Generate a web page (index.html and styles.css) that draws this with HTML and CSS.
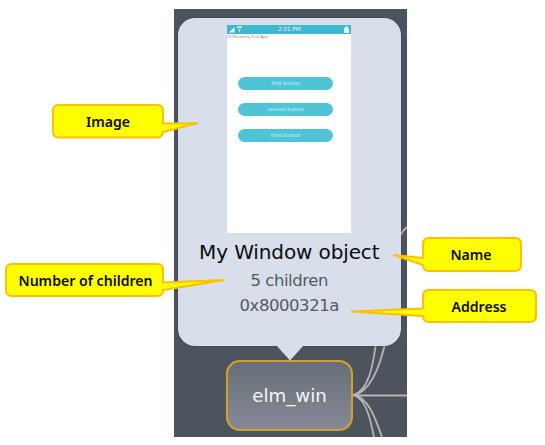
FILE: index.html
```html
<!DOCTYPE html>
<html lang="en">
<head>
<meta charset="utf-8">
<title>Object tooltip</title>
<link rel="stylesheet" href="styles.css">
</head>
<body>
<main class="figure">
  <section class="panel">
    <svg class="links" width="233" height="428" viewBox="0 0 233 428">
      <path d="M179 386C194 382 199 360 203 326M179 386C196 384 206 360 213 326M226 227Q229 221 233 218M179 386C192 390 196 408 200 428M179 386C194 388 201 408 208 428M179 386.500H233"/>
    </svg>
    <div class="card">
      <div class="phone">
        <div class="status">
          <svg width="18" height="9" viewBox="0 0 18 9"><path d="M2 7.500L7.500 2v5.500z"/><path d="M10 1h5v2h-5zM11 4h3v1h-3zM12 5h1v2h-1z" opacity=".7"/></svg>
          <span class="time">2:31 PM</span>
          <svg width="9" height="9" viewBox="0 0 9 9"><path d="M2 3h5v5H2zM3 1.500h3V3H3z"/></svg>
        </div>
        <p class="title">UI Hierarchy Test App</p>
        <div class="buttons">
          <span class="button">first button</span>
          <span class="button">second button</span>
          <span class="button">third button</span>
        </div>
      </div>
      <h1 class="name">My Window object</h1>
      <p class="detail children">5 children</p>
      <p class="detail address">0x8000321a</p>
    </div>
    <svg class="pointer" width="28" height="16" viewBox="0 0 28 16"><path d="M0 0H28L14 15.500Z"/></svg>
    <div class="node"><span>elm_win</span></div>
  </section>

  <div class="callout image">
    <svg width="150" height="40" viewBox="0 0 150 40"><path d="M7 2H105Q111 2 111 8V20.500L145 20.300L111 29V29Q110 34.500 105 34.500H7Q1 34.500 1 28.500V8Q1 2 7 2Z"/></svg>
    <span>Image</span>
  </div>
  <div class="callout count">
    <svg width="225" height="40" viewBox="0 0 225 40"><path d="M7 2H152Q158 2 158 8V20.500L219 18L158 28V28Q158 34 152 34H7Q1 34 1 28V8Q1 2 7 2Z"/></svg>
    <span>Number of children</span>
  </div>
  <div class="callout object-name">
    <svg width="135" height="40" viewBox="0 0 135 40"><path d="M38 2H124Q130 2 130 8V29Q130 35 124 35H38Q32 35 32 29V29L3 19L32 22V8Q32 2 38 2Z"/></svg>
    <span>Name</span>
  </div>
  <div class="callout object-address">
    <svg width="190" height="40" viewBox="0 0 190 40"><path d="M78 2H179Q185 2 185 8V28Q185 34 179 34H78Q72 34 72 28V28L0 23.500L72 20.500V8Q72 2 78 2Z"/></svg>
    <span>Address</span>
  </div>
</main>
</body>
</html>
```
FILE: styles.css
```css
* { box-sizing: border-box; }
body { margin: 0; background: #fff; font-family: "DejaVu Sans", sans-serif; }
p, h1 { margin: 0; font-weight: 400; }
.figure { position: relative; width: 545px; height: 445px; padding: 9px 0 0 174px; overflow: hidden; }
.panel {
  position: relative;
  display: flex; flex-direction: column;
  width: 233px; height: 428px; padding: 8.5px 0 0 3.5px;
  background: #4e545e; overflow: hidden;
}
.links { position: absolute; left: 0; top: 0; fill: none; stroke: #b4b5b6; stroke-width: 1.8; }
.card {
  position: relative;
  display: flex; flex-direction: column; align-items: center;
  width: 223.5px; height: 328px; padding-top: 7.500px;
  border-radius: 17px; background: #d8deea;
  box-shadow: 0 0 2px #343a43;
}
.phone { width: 124px; height: 208px; background: #fff; }
.status {
  display: flex; justify-content: space-between; align-items: center;
  height: 9px; background: #3db8cc; color: #e4f7fa; fill: #effafc;
}
.status svg { display: block; }
.time { font: 5.800px/9px "DejaVu Sans", sans-serif; padding-right: 9px; letter-spacing: -.1px; }
.title { height: 8px; font: 4px/6px "Open Sans", sans-serif; color: #777; white-space: nowrap; }
.buttons { display: flex; flex-direction: column; gap: 13px; padding: 35px 18px 0 11px; }
.button {
  height: 13px; border-radius: 6.500px; background: #50c4d7; color: #d5f3f8;
  font: 5px/13px "DejaVu Sans", sans-serif; text-align: center;
}
.name { margin-top: 6px; font-size: 20px; line-height: 26px; letter-spacing: -.12px; color: #0b0c0f; white-space: nowrap; }
.detail { font-size: 16.500px; line-height: 25px; letter-spacing: -.45px; color: #555a61; white-space: nowrap; }
.children { margin-top: 3px; }
.address { margin-top: 0; }
.pointer { display: block; position: relative; margin-left: 98.500px; margin-top: -1px; fill: #d8deea; }
.node {
  display: flex; align-items: center; justify-content: center;
  width: 127px; height: 71px; margin: -.500px 0 0 48.500px;
  border: 2px solid #d2a128; border-radius: 14px;
  background: linear-gradient(#686e77, #858a96);
  color: #f4f5f7; font-size: 18.200px;
}
.node span { margin-top: -1px; }
.callout { position: absolute; }
.callout svg { display: block; fill: #ff0; stroke: #ffc000; stroke-width: 2; stroke-linejoin: round; }
.callout span {
  position: absolute; left: 0; top: 3px; height: 32px;
  font: 600 14.100px/32px "Noto Sans", sans-serif; color: #0c0c00;
  text-align: center; white-space: nowrap;
}
.image { left: 52px; top: 103px; }
.image span { width: 112px; }
.count { left: 5px; top: 262px; }
.count span { width: 161px; }
.object-name { left: 391px; top: 236px; }
.object-name span { left: 31px; width: 98px; }
.object-address { left: 351px; top: 288px; }
.object-address span { left: 71px; width: 114px; }
```
